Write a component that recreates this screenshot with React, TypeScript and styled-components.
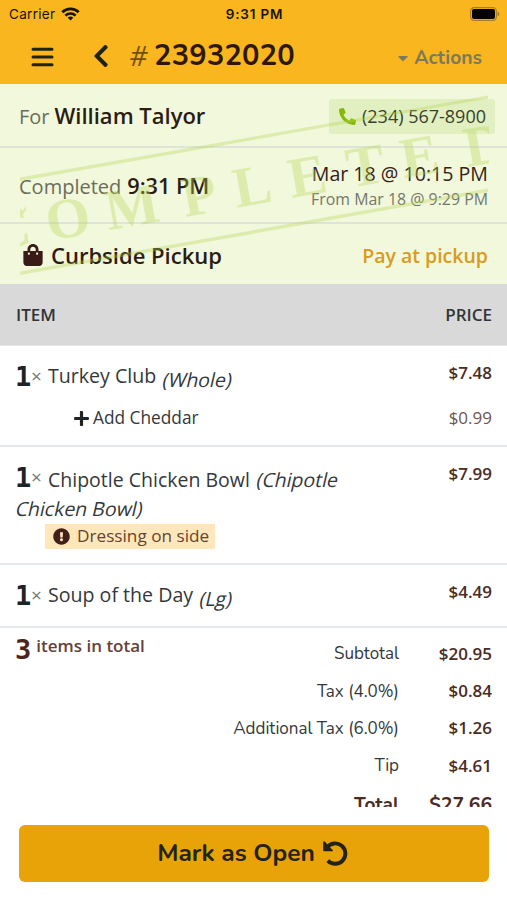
import React from "react";
import styled, { createGlobalStyle } from "styled-components";
import {
  FaCaretDown,
  FaChevronLeft,
  FaExclamationCircle,
  FaPhoneAlt,
  FaPlus,
  FaShoppingBag,
} from "react-icons/fa";

const sans = '"Open Sans", "Noto Sans", sans-serif';
const rounded = 'Nunito, "Open Sans", sans-serif';

const GlobalStyle = createGlobalStyle`
  * { box-sizing: border-box; }
  body { margin: 0; background: #fff; }
`;

interface TextProps {
  $size: number;
  $weight?: number;
  $color?: string;
  $track?: number;
  $line?: number;
  $family?: string;
}

const Text = styled.span<TextProps>`
  font-family: ${(p) => p.$family ?? sans};
  font-size: ${(p) => p.$size}px;
  font-weight: ${(p) => p.$weight ?? 400};
  color: ${(p) => p.$color ?? "#34383b"};
  letter-spacing: ${(p) => p.$track ?? 0}px;
  line-height: ${(p) => p.$line ?? 24}px;
  white-space: nowrap;
`;

const Screen = styled.div`
  width: 507px;
  height: 900px;
  display: flex;
  flex-direction: column;
  overflow: hidden;
  background: #fff;
  font-family: ${sans};
`;

const StatusBar = styled.div`
  height: 28px;
  flex: none;
  display: grid;
  grid-template-columns: 1fr auto 1fr;
  align-items: center;
  padding: 0 7px 0 9px;
  background: #f9b61e;
`;

const Carrier = styled.div`
  display: flex;
  align-items: center;
  gap: 6px;
`;

const BatterySlot = styled.div`
  display: flex;
  justify-content: flex-end;
`;

const Header = styled.header`
  height: 56px;
  flex: none;
  display: flex;
  align-items: center;
  padding: 2px 25px 0 31px;
  background: #f9b61e;
  color: #1d221d;
`;

const BackIcon = styled(FaChevronLeft)`
  width: 18px;
  height: 26px;
  margin: 0 0 2px 38px;
`;

const OrderNumber = styled.h1`
  margin: 0 0 3px 20px;
  display: flex;
  gap: 6px;
`;

const Hash = styled(Text)`
  transform: translateY(-1px) skewX(-7deg);
`;

const Actions = styled.div`
  margin: 2px 0 0 auto;
  display: flex;
  align-items: center;
  gap: 3px;
  color: #7c7a5c;
`;

const Summary = styled.section`
  position: relative;
  flex: none;
  background: #f1f8dc;
`;

const SummaryRow = styled.div<{ $height: number; $last?: boolean }>`
  height: ${(p) => p.$height}px;
  display: flex;
  align-items: center;
  justify-content: space-between;
  padding: 2px 19px 0;
  border-bottom: ${(p) => (p.$last ? "0" : "2px solid #dfe3d8")};
`;

const Pair = styled.div<{ $gap: number }>`
  display: flex;
  align-items: baseline;
  gap: ${(p) => p.$gap}px;
`;

const PhoneChip = styled.div`
  height: 35px;
  width: 166px;
  margin: 0 -7px 0 0;
  padding: 0 9px 0 10px;
  display: flex;
  align-items: center;
  justify-content: space-between;
  border-radius: 3px;
  background: #e1efc1;
  color: #84b80c;
`;

const Times = styled.div`
  display: flex;
  flex-direction: column;
  align-items: flex-end;
`;

const Pickup = styled.div`
  display: flex;
  align-items: center;
  gap: 7px;
  padding-left: 3px;
  color: #381b16;
`;

const Watermark = styled.svg`
  position: absolute;
  left: 20px;
  top: 0;
  width: 469px;
  height: 200px;
  pointer-events: none;
`;

const TableHead = styled.div`
  height: 62px;
  flex: none;
  display: flex;
  align-items: center;
  justify-content: space-between;
  padding: 0 15px 0 16px;
  background: #d9d9d9;
  border-bottom: 1px solid #e4e6e7;
`;

const Item = styled.div<{ $height: number }>`
  height: ${(p) => p.$height}px;
  flex: none;
  display: flex;
  justify-content: space-between;
  padding: 15px 15px 0 16px;
  border-bottom: 2px solid #e5e8ea;
`;

const ItemBody = styled.div`
  display: flex;
  flex-direction: column;
  align-items: flex-start;
`;

const ItemLine = styled.div`
  display: flex;
  align-items: baseline;
  height: 30px;
`;

const Count = styled.span`
  width: 16px;
  margin-left: -1px;
  font: 700 27px/32px "DejaVu Sans Mono", monospace;
  color: #202326;
`;

const Multiply = styled.span`
  width: 17px;
  font: 400 19px/20px ${sans};
  color: #74797c;
  transform: translateY(-3px);
`;

const ItemName = styled(Text)<{ $rise?: number }>`
  transform: translateY(${(p) => -(p.$rise ?? 0)}px);
`;

const Variant = styled.em<{ $drop?: number }>`
  margin-left: 7px;
  font: normal 400 19.5px/28px ${sans};
  color: #34383b;
  white-space: nowrap;
  transform: translateY(${(p) => p.$drop ?? 0}px) skewX(-13deg);
`;

const ContinuedVariant = styled(Variant)`
  margin: 3px 0 -1px;
`;

const Modifier = styled.div`
  display: flex;
  align-items: center;
  gap: 3px;
  margin: 15px 0 0 57px;
  color: #202326;
`;

const Note = styled.div`
  display: flex;
  align-items: center;
  gap: 7px;
  width: 170px;
  height: 25px;
  margin: 2px 0 0 29px;
  padding: 0 0 1px 8px;
  background: #ffe7bb;
  color: #432119;
  svg { flex: none; }
`;

const Prices = styled.div`
  display: flex;
  flex-direction: column;
  align-items: flex-end;
  gap: 21px;
`;

const Totals = styled.section`
  height: 179px;
  flex: none;
  display: flex;
  justify-content: space-between;
  overflow: hidden;
  padding: 0 15px 0 15px;
`;

const ItemCount = styled.div`
  display: flex;
  gap: 5px;
  align-items: flex-start;
  padding-top: 6px;
`;

const TotalCount = styled.span`
  font: 700 27px/32px "DejaVu Sans Mono", monospace;
  color: #4b261f;
`;

const TotalsTable = styled.div`
  display: grid;
  grid-template-columns: auto 93px;
  grid-auto-rows: 37.4px;
  align-items: center;
  justify-items: end;
  padding-top: 7px;
`;

const ChargeLabel = styled(Text)`
  padding-top: 1px;
`;

const GrandTotal = styled(Text)`
  padding-top: 3px;
`;

const Footer = styled.footer`
  flex: 1;
  padding: 18px 18px 18px 19px;
`;

const OpenButton = styled.button`
  width: 470px;
  height: 57px;
  display: flex;
  align-items: center;
  justify-content: center;
  gap: 7px;
  padding: 0 9px 2px 6px;
  border: 0;
  border-radius: 6px;
  background: #e8a308;
  color: #222419;
`;

const WifiIcon = () => (
  <svg width="19" height="14" viewBox="0 0 19 14" fill="none" stroke="#171307" strokeWidth="2.7">
    <path d="M1.3 5.2a11.8 11.8 0 0 1 16.4 0" />
    <path d="M4.4 8.6a7.3 7.3 0 0 1 10.2 0" />
    <path d="M9.5 13.5 6.7 10.8a4 4 0 0 1 5.6 0Z" fill="#171307" stroke="none" />
  </svg>
);

const BatteryIcon = () => (
  <svg width="30" height="14" viewBox="0 0 30 14">
    <rect x=".6" y=".6" width="25.8" height="12.8" rx="3.6" fill="none" stroke="#ab7e18" strokeWidth="1.2" />
    <rect x="2" y="2" width="23" height="10" rx="2" fill="#050400" />
    <path d="M27.7 4.8c2.1.6 2.1 3.8 0 4.4Z" fill="#98701a" />
  </svg>
);

const MenuIcon = () => (
  <svg width="23" height="20" viewBox="0 0 23 20" stroke="#202418" strokeWidth="3" strokeLinecap="round">
    <path d="M2 2.2h19M2 10h19M2 17.8h19" />
  </svg>
);

const ReopenIcon = () => (
  <svg width="26" height="26" viewBox="0 0 26 26">
    <path d="M5 7.5A10.2 10.2 0 1 1 5.8 20.6" fill="none" stroke="#222419" strokeWidth="3.9" />
    <path d="M1.2 2.2v8.3q0 .8.8.8h8.4q1-.2.4-1L2.7 1.6q-1.2-.7-1.5.6Z" fill="#222419" />
  </svg>
);

const letters = [-7, 52, 117, 185, 239, 295, 354, 409, 475];

const CompletedMark = () => (
  <Watermark viewBox="0 0 469 200">
    <g fill="#b7d552" stroke="none" opacity="0.34">
      <path d="M0 93.5 468 11.5v3L0 97Z" />
      <path d="M0 187.5 468 104.5v3.5L0 191Z" />
      <path d="M0 130.5 6 122v4L0 134Z" />
      <text
        transform="translate(0 162) rotate(-10)"
        x={letters.join(" ")}
        y="0"
        textAnchor="middle"
        fontFamily="Liberation Serif, serif"
        fontWeight="700"
        fontSize="57"
      >
        COMPLETED
      </text>
    </g>
  </Watermark>
);

const charges = [
  { label: "Subtotal", amount: "$20.95" },
  { label: "Tax (4.0%)", amount: "$0.84" },
  { label: "Additional Tax (6.0%)", amount: "$1.26" },
  { label: "Tip", amount: "$4.61" },
];

const Price = ({ children }: { children: React.ReactNode }) => (
  <Text $size={17} $weight={600} $color="#4b2b25">{children}</Text>
);

export default function App() {
  return (
    <Screen>
      <GlobalStyle />
      <StatusBar>
        <Carrier>
          <Text $family="Inter, sans-serif" $size={13.5} $line={20} $color="#171307" $track={0.3}>Carrier</Text>
          <WifiIcon />
        </Carrier>
        <Text $family="Inter, sans-serif" $size={13.5} $line={20} $weight={600} $color="#171307" $track={0.8}>9:31 PM</Text>
        <BatterySlot><BatteryIcon /></BatterySlot>
      </StatusBar>
      <Header>
        <MenuIcon />
        <BackIcon />
        <OrderNumber>
          <Hash $size={28} $line={36} $color="#72500c">#</Hash>
          <Text $family={rounded} $size={29} $line={36} $weight={700} $color="#2c1803" $track={0.2}>23932020</Text>
        </OrderNumber>
        <Actions>
          <FaCaretDown size={16} />
          <Text $family={rounded} $size={19.3} $weight={700} $color="#7c7a5c">Actions</Text>
        </Actions>
      </Header>
      <Summary>
        <SummaryRow $height={64}>
          <Pair $gap={5}>
            <Text $size={20} $weight={500} $color="#6b6d5b">For</Text>
            <Text $size={22} $weight={600} $color="#2c1b13">William Talyor</Text>
          </Pair>
          <PhoneChip>
            <FaPhoneAlt size={17} />
            <Text $size={18} $color="#38412d">(234) 567-8900</Text>
          </PhoneChip>
        </SummaryRow>
        <SummaryRow $height={76}>
          <Pair $gap={6}>
            <Text $size={20} $weight={500} $color="#6b6d5b">Completed</Text>
            <Text $size={21.7} $weight={600} $color="#2c1b13">9:31 PM</Text>
          </Pair>
          <Times>
            <Text $size={19.6} $color="#35221a" $line={26}>Mar 18 @ 10:15 PM</Text>
            <Text $size={15.9} $color="#74776a" $line={24}>From Mar 18 @ 9:29 PM</Text>
          </Times>
        </SummaryRow>
        <SummaryRow $height={60} $last>
          <Pickup>
            <FaShoppingBag size={22} />
            <Text $size={22} $weight={600} $color="#2c1b13">Curbside Pickup</Text>
          </Pickup>
          <Text $size={19.5} $weight={600} $color="#d99b20" $line={27}>Pay at pickup</Text>
        </SummaryRow>
        <CompletedMark />
      </Summary>
      <TableHead>
        <Text $size={17} $weight={600} $color="#303438">ITEM</Text>
        <Text $size={17} $weight={600} $color="#303438">PRICE</Text>
      </TableHead>
      <Item $height={101}>
        <ItemBody>
          <ItemLine>
            <Count>1</Count>
            <Multiply>×</Multiply>
            <ItemName $size={19.6} $rise={3}>Turkey Club</ItemName>
            <Variant $drop={1}>(Whole)</Variant>
          </ItemLine>
          <Modifier>
            <FaPlus size={17} />
            <Text $size={17.3}>Add Cheddar</Text>
          </Modifier>
        </ItemBody>
        <Prices>
          <Price>$7.48</Price>
          <Text $size={17} $color="#70544e">$0.99</Text>
        </Prices>
      </Item>
      <Item $height={118}>
        <ItemBody>
          <ItemLine>
            <Count>1</Count>
            <Multiply>×</Multiply>
            <ItemName $size={19.5}>Chipotle Chicken Bowl</ItemName>
            <Variant>(Chipotle</Variant>
          </ItemLine>
          <ContinuedVariant>Chicken Bowl)</ContinuedVariant>
          <Note>
            <FaExclamationCircle size={17} />
            <Text $size={17.2} $color="#63452f">Dressing on side</Text>
          </Note>
        </ItemBody>
        <Prices><Price>$7.99</Price></Prices>
      </Item>
      <Item $height={63}>
        <ItemBody>
          <ItemLine>
            <Count>1</Count>
            <Multiply>×</Multiply>
            <ItemName $size={19.6} $rise={3}>Soup of the Day</ItemName>
            <Variant $drop={1}>(Lg)</Variant>
          </ItemLine>
        </ItemBody>
        <Prices><Price>$4.49</Price></Prices>
      </Item>
      <Totals>
        <ItemCount>
          <TotalCount>3</TotalCount>
          <Text $size={17} $weight={600} $color="#65413b">items in total</Text>
        </ItemCount>
        <TotalsTable>
          {charges.map((c) => (
            <React.Fragment key={c.label}>
              <ChargeLabel $family={rounded} $size={17} $line={26}>{c.label}</ChargeLabel>
              <Price>{c.amount}</Price>
            </React.Fragment>
          ))}
          <GrandTotal $family={rounded} $size={19} $weight={700} $color="#4b2b25">Total</GrandTotal>
          <GrandTotal $family={rounded} $size={19.3} $weight={700} $color="#4b2b25">$27.66</GrandTotal>
        </TotalsTable>
      </Totals>
      <Footer>
        <OpenButton>
          <Text $family={rounded} $size={24.5} $weight={700} $color="#222419">Mark as Open</Text>
          <ReopenIcon />
        </OpenButton>
      </Footer>
    </Screen>
  );
}
